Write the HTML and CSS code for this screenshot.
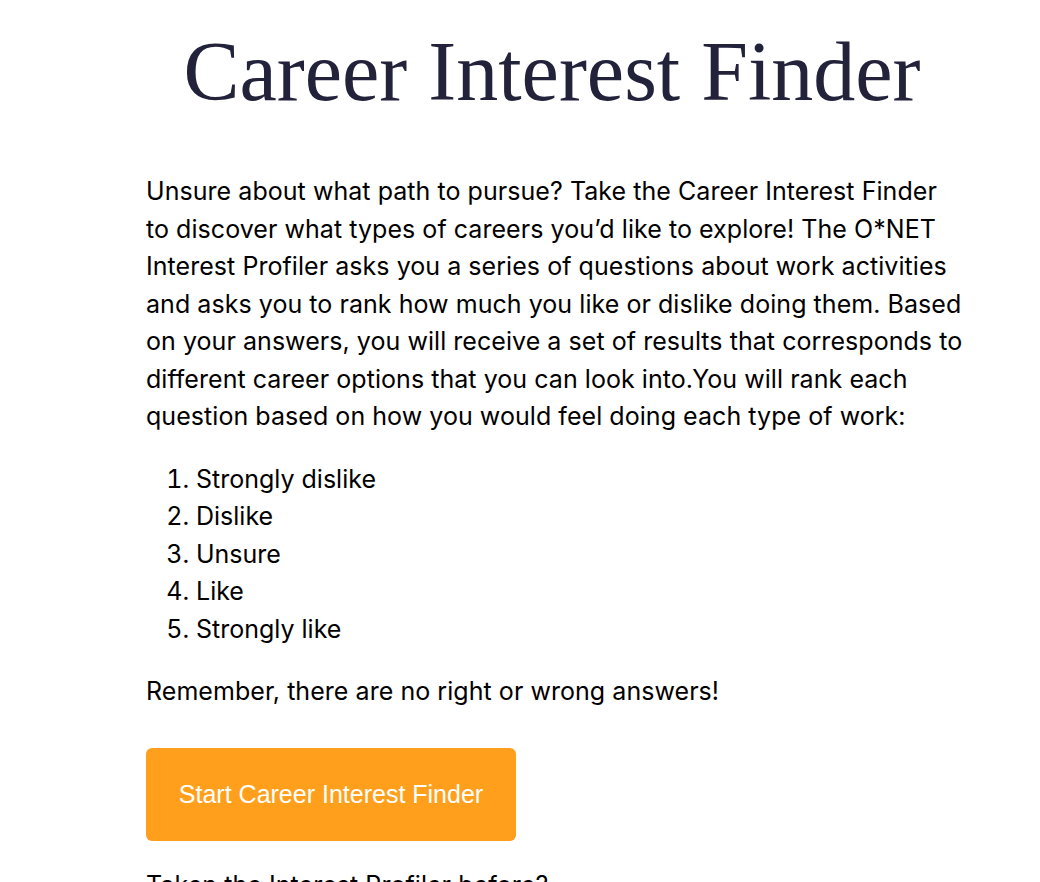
FILE: index.html
```html
<!DOCTYPE html>
<html lang="en">
<head>
<meta charset="utf-8">
<title>Career Interest Finder</title>
<link rel="stylesheet" href="styles.css">
</head>
<body>
<main class="page">
  <h1 class="title">Career Interest Finder</h1>
  <p class="text intro">Unsure about what path to pursue? Take the Career Interest Finder to discover what types of careers you’d like to explore! The O*NET Interest Profiler asks you a series of questions about work activities and asks you to rank how much you like or dislike doing them. Based on your answers, you will receive a set of results that corresponds to different career options that you can look into.You will rank each question based on how you would feel doing each type of work:</p>
  <ol class="scale">
    <li>Strongly dislike</li>
    <li>Dislike</li>
    <li>Unsure</li>
    <li>Like</li>
    <li>Strongly like</li>
  </ol>
  <p class="text">Remember, there are no right or wrong answers!</p>
  <a class="start-btn" href="#">Start Career Interest Finder</a>
  <p class="text after">Taken the Interest Profiler before?</p>
</main>
</body>
</html>
```

FILE: styles.css
```css
html, body {
  margin: 0;
  padding: 0;
  background: #ffffff;
}

.page {
  width: 812px;
  margin-left: 146px;
  font-family: "Inter", "Noto Sans", sans-serif;
  color: #000000;
}

.title {
  margin: 0;
  padding-top: 22px;
  text-align: center;
  font-family: "Liberation Serif", "Times New Roman", serif;
  font-weight: 400;
  font-size: 84px;
  line-height: 100px;
  color: #22223b;
}

.text {
  margin: 0;
  font-size: 25px;
  line-height: 1.5;
  letter-spacing: 0.05px;
}

.intro {
  margin-top: 51px;
  margin-right: -8px;
}

.scale {
  margin: 25px 0 25px 0;
  padding-left: 50px;
  font-size: 25px;
  line-height: 1.5;
}

.start-btn {
  display: flex;
  align-items: center;
  justify-content: center;
  width: 370px;
  height: 93px;
  margin-top: 37px;
  border-radius: 6px;
  background: #ff9f1c;
  color: #ffffff;
  text-decoration: none;
  font-family: "Liberation Sans", Arial, sans-serif;
  font-size: 25px;
}

.after {
  margin-top: 26px;
}
```
